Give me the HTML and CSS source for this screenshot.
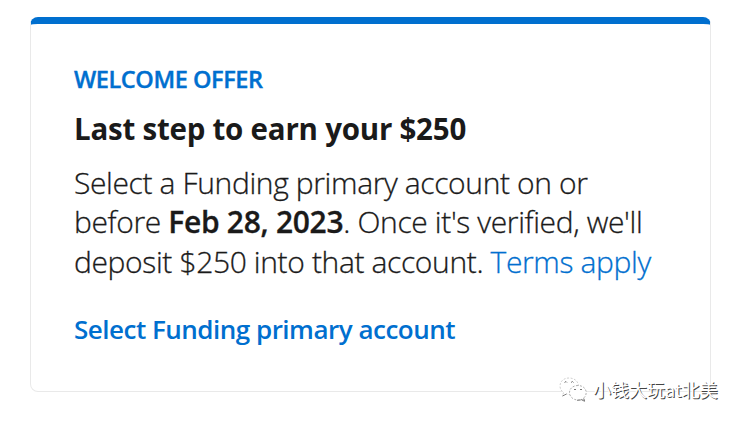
FILE: index.html
```html
<!DOCTYPE html>
<html lang="en">
<head>
  <meta charset="UTF-8" />
  <meta name="viewport" content="width=device-width, initial-scale=1.0"/>
  <title>Welcome Offer</title>
  <link rel="stylesheet" href="styles.css">
</head>
<body>
  <div class="card">
    <div class="eyebrow">WELCOME OFFER</div>
    <h1 class="title">Last step to earn your $250</h1>
    <p class="message">
      Select a Funding primary account on or<br>
      before <strong>Feb 28, 2023</strong>. Once it's verified, we'll<br>
      deposit $250 into that account. <a class="terms" href="#">Terms apply</a>
    </p>
    <a class="action" href="#">Select Funding primary account</a>
  </div>

  <!-- Account tag over the card corner -->
  <div class="watermark">
    <svg class="bubbles" width="28" height="25" viewBox="0 0 28 25">
      <g fill="#fff" stroke="#8c8c8c" stroke-width="0.7" stroke-dasharray="2 1.500">
        <path d="M10 1C4.500 1 1 4.500 1 9c0 3 1.500 5 3.500 6.500L3.500 19l4-2c5 1.500 12-1 12-8C19.500 4.500 15.500 1 10 1z" stroke="#bbb"/>
        <path d="M19 8.500c-5 0-8.500 3-8.500 7s3.500 7.500 8.500 7.500c1.500 0 2.500-.2 3.500-.6l3 1.600-.8-3c1.500-1.300 2.500-3 2.500-5.500 0-4-3.500-7-8.200-7z"/>
      </g>
      <path d="M5.500 5.500l1.500-1 1 1M12 5.500l1.500-1 1 1M15 13l1-1 1 1M21 13l1-1 1 1" fill="none" stroke="#777"/>
      <path d="M3.500 19l4-2M18 23.300c2 0 3-.2 4.500-.6l3 1.600-.8-3" fill="none" stroke="#666" stroke-width="0.8"/>
    </svg>
    <span class="handle">小钱大玩at北美</span>
  </div>
</body>
</html>
```

FILE: styles.css
```css
body {
  margin: 0;
  background: #fff;
  color: #1a1a1a;
  font-family: "Open Sans", "Noto Sans", sans-serif;
}

.card {
  box-sizing: border-box;
  width: 681px;
  height: 375px;
  margin: 17px 0 0 30px;
  padding: 42px 0 0 43px;
  border: 1px solid #e9e9e9;
  border-top: 7px solid #006fcf;
  border-radius: 8px;
  white-space: nowrap;
}

.eyebrow {
  color: #006fcf;
  font-size: 23.5px;
  font-weight: 600;
  line-height: 26px;
  letter-spacing: -0.42px;
  -webkit-text-stroke: 0.4px;
}

.title {
  margin: 19px 0 0;
  font-size: 29.5px;
  font-weight: 700;
  line-height: 36px;
  letter-spacing: -0.23px;
}

.message {
  margin: 16px 0 0;
  font-size: 30px;
  font-weight: 300;
  line-height: 39.3px;
  letter-spacing: -0.37px;
  -webkit-text-stroke: 0.3px;
}

.message strong {
  font-weight: 600;
  letter-spacing: -0.3px;
}

.terms,
.action {
  color: #006fcf;
  text-decoration: none;
}

.action {
  display: inline-block;
  margin-top: 30px;
  font-size: 26px;
  font-weight: 600;
  line-height: 36px;
  letter-spacing: -0.5px;
}

.watermark {
  position: absolute;
  left: 559px;
  top: 375px;
  display: flex;
  align-items: center;
  gap: 6px;
}

.bubbles {
  display: block;
}

.handle {
  color: #fff;
  font-family: "Noto Sans CJK SC", sans-serif;
  font-size: 18px;
  line-height: 28px;
  text-shadow: 1px 1px 0 #444;
  white-space: nowrap;
}
```
